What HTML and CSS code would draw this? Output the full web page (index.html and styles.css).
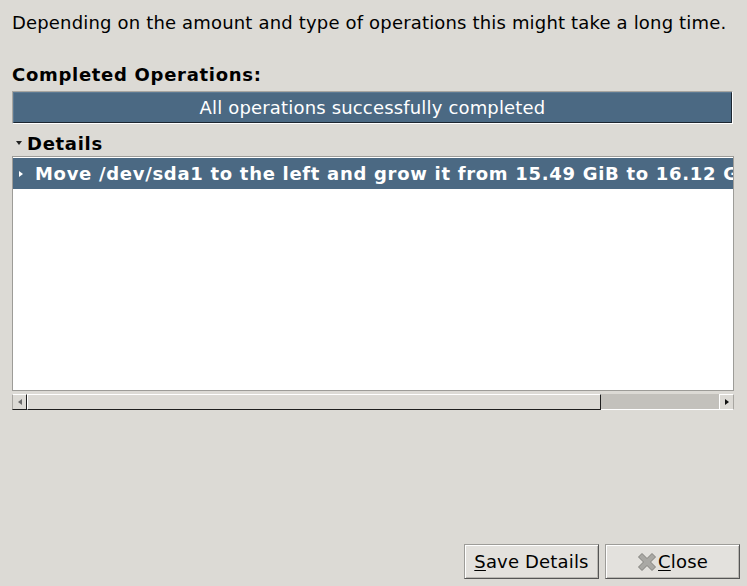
FILE: index.html
```html
<!DOCTYPE html>
<html>
<head>
<meta charset="utf-8">
<link rel="stylesheet" href="styles.css">
</head>
<body>
<div class="dialog">
  <p class="intro">Depending on the amount and type of operations this might take a long time.</p>
  <div class="label">Completed Operations:</div>
  <div class="progress"><div class="progress-fill">All operations successfully completed</div></div>
  <div class="expander"><span class="exp-arrow"></span><span class="exp-label">Details</span></div>
  <div class="tree">
    <div class="tree-view">
      <div class="row selected"><span class="row-arrow"></span><span class="row-text">Move /dev/sda1 to the left and grow it from 15.49 GiB to 16.12 GiB</span></div>
    </div>
    <div class="hscroll">
      <div class="sb-btn left"><span class="sb-arrow-l"></span></div>
      <div class="sb-slider"></div>
      <div class="sb-trough"></div>
      <div class="sb-btn right"><span class="sb-arrow-r"></span></div>
    </div>
  </div>
  <div class="spacer"></div>
  <div class="buttons">
    <button class="btn"><span class="u">S</span>ave Details</button>
    <button class="btn"><svg class="x-icon" width="20" height="20" viewBox="0 0 20 20"><path d="M1.5 5 L5 1.5 L10 6.5 L15 1.5 L18.5 5 L13.5 10 L18.5 15 L15 18.5 L10 13.5 L5 18.5 L1.5 15 L6.5 10 Z" fill="#a9a8a4" stroke="#82817d" stroke-width="1" stroke-linejoin="round"/></svg><span class="u">C</span>lose</button>
  </div>
</div>
</body>
</html>
```
FILE: styles.css
```css
html, body {
  margin: 0;
  padding: 0;
  background: #dcdad5;
  height: 100%;
}
.dialog {
  box-sizing: border-box;
  height: 586px;
  display: flex;
  flex-direction: column;
  padding: 0 7px 7px 12px;
  font-family: "DejaVu Sans", sans-serif;
  font-size: 18px;
  letter-spacing: 0.17px;
  color: #000;
}
.intro {
  margin: 12px 0 0 0;
  line-height: 22px;
  white-space: nowrap;
}
.label {
  margin-top: 30px;
  font-weight: bold;
  letter-spacing: 0.7px;
  line-height: 22px;
}
.progress {
  margin-top: 5px;
  margin-right: 7px;
  height: 33px;
  box-sizing: border-box;
  border: 1px solid;
  border-color: #a8a6a1 #ffffff #ffffff #a8a6a1;
}
.progress-fill {
  box-sizing: border-box;
  height: 100%;
  background: #4b6983;
  border: 1px solid;
  border-color: #5d7a93 #1c2630 #1c2630 #5d7a93;
  color: #fff;
  text-align: center;
  line-height: 29px;
}
.expander {
  margin-top: 8px;
  display: flex;
  align-items: center;
  height: 22px;
}
.exp-arrow {
  width: 0;
  height: 0;
  margin: 0 5px 0 4px;
  border-left: 3.5px solid transparent;
  border-right: 3.5px solid transparent;
  border-top: 4px solid #222;
}
.exp-label {
  font-weight: bold;
  letter-spacing: 0.7px;
}
.tree {
  margin-top: 2px;
  margin-right: 6px;
  display: flex;
  flex-direction: column;
}
.tree-view {
  box-sizing: border-box;
  height: 235px;
  background: #fff;
  border: 1px solid #9d9c98;
  padding-top: 1px;
  overflow: hidden;
}
.row {
  display: flex;
  align-items: center;
  height: 31px;
  white-space: nowrap;
  overflow: hidden;
}
.row.selected {
  background: #4b6983;
  color: #fff;
  font-weight: bold;
  letter-spacing: 0.7px;
}
.row-arrow {
  flex: none;
  width: 0;
  height: 0;
  margin: 0 12px 0 6px;
  border-top: 3.5px solid transparent;
  border-bottom: 3.5px solid transparent;
  border-left: 4px solid #fff;
}
.row-text {
  flex: none;
}
.hscroll {
  margin-top: 3px;
  height: 16px;
  display: flex;
  background: #c3c1bc;
}
.sb-btn {
  box-sizing: border-box;
  width: 15px;
  height: 16px;
  background: #dcdad5;
  display: flex;
  align-items: center;
  justify-content: center;
  border: 1px solid;
  border-color: #fff #1e1e1e #1e1e1e #fff;
}
.sb-btn.left {
  border-color: #fff #1e1e1e #1e1e1e #a8a6a1;
}
.sb-btn.right {
  border-color: #fff #a8a6a1 #fff #fff;
}
.sb-arrow-l {
  width: 0; height: 0;
  border-top: 3.5px solid transparent;
  border-bottom: 3.5px solid transparent;
  border-right: 4px solid #6a6a6a;
}
.sb-arrow-r {
  width: 0; height: 0;
  border-top: 3.5px solid transparent;
  border-bottom: 3.5px solid transparent;
  border-left: 4px solid #111;
}
.sb-slider {
  box-sizing: border-box;
  width: 574px;
  height: 16px;
  background: #dcdad5;
  border: 1px solid;
  border-color: #fff #1e1e1e #1e1e1e #fff;
}
.sb-trough {
  flex: 1;
  border-bottom: 1px solid #fff;
}
.spacer {
  flex: 1;
}
.buttons {
  display: flex;
  justify-content: flex-end;
  gap: 6px;
}
.btn {
  box-sizing: border-box;
  width: 135px;
  height: 35px;
  font-family: "DejaVu Sans", sans-serif;
  font-size: 18px;
  letter-spacing: 0.17px;
  color: #000;
  background: #e3e1dd;
  border: 1px solid;
  border-color: #9d9c98 #555 #555 #9d9c98;
  box-shadow: inset 1px 1px 0 #fff, inset -1px -1px 0 #b9b7b2;
  display: flex;
  align-items: center;
  justify-content: center;
  padding: 0;
}
.u {
  text-decoration: underline;
  text-underline-offset: 2px;
}
.x-icon {
  margin-right: 1px;
}
```
